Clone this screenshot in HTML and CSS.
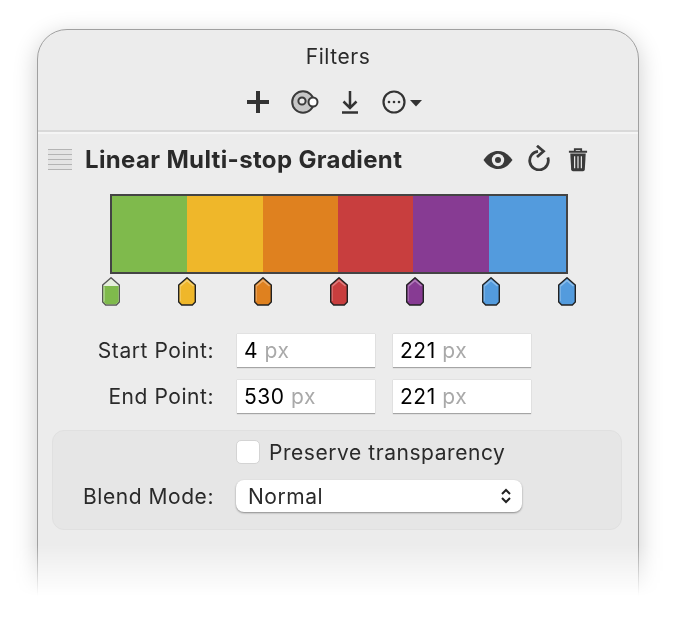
FILE: index.html
```html
<!DOCTYPE html>
<html lang="en">
<head>
  <meta charset="UTF-8" />
  <title>Filters</title>
  <link rel="stylesheet" href="styles.css">
</head>
<body>

  <svg class="defs" width="0" height="0">
    <symbol id="stop" viewBox="0 0 18 29">
      <path d="M9 .8 17.300 8v17l-3 3H3.700l-3-3V8z" fill="currentColor" stroke="#222" stroke-width="1.400"/>
      <path d="M2.500 9 9 3.500 15.500 9" fill="none" stroke="#fff" stroke-opacity=".35" stroke-width="1.500"/>
      <path d="M2.300 9v15" fill="none" stroke="#fff" stroke-opacity=".25" stroke-width="1.200"/>
    </symbol>
  </svg>

  <div class="stage">
    <div class="window">
      <div class="title">Filters</div>

      <div class="toolbar">
        <svg width="24" height="24" viewBox="0 0 24 24"><path d="M12 1v22M1 12h22" stroke="#333" stroke-width="4" fill="none"/></svg>
        <svg width="28" height="24" viewBox="0 0 28 24">
          <circle cx="12" cy="12" r="10.800" fill="#c6c6c6" stroke="#3a3a3a" stroke-width="2"/>
          <circle cx="11" cy="11" r="3.600" fill="#ececec" stroke="#3a3a3a" stroke-width="2"/>
          <circle cx="22" cy="12" r="4.500" fill="#fff" stroke="#3a3a3a" stroke-width="2"/>
        </svg>
        <svg width="18" height="24" viewBox="0 0 18 24"><path d="M9 1v17M2.500 11.500 9 18l6.500-6.500M1 22.500h16" stroke="#333" stroke-width="2.500" fill="none"/></svg>
        <svg width="42" height="24" viewBox="0 0 42 24">
          <circle cx="13" cy="12" r="10.500" fill="none" stroke="#333" stroke-width="2.200"/>
          <circle cx="8" cy="12" r="1.300" fill="#333"/><circle cx="13" cy="12" r="1.300" fill="#333"/><circle cx="18" cy="12" r="1.300" fill="#333"/>
          <path d="M29 10h12l-6 6.500z" fill="#333"/>
        </svg>
      </div>

      <div class="filter-head">
        <div class="grip"></div>
        <h2>Linear Multi-stop Gradient</h2>
        <div class="head-icons">
          <svg width="30" height="20" viewBox="0 0 30 20">
            <path d="M.5 10C5 3.500 10 1 15 1s10 2.500 14.500 9C25 16.500 20 19 15 19S5 16.500.5 10z" fill="#3a3a3a"/>
            <circle cx="15" cy="10" r="6.200" fill="#ececec"/><circle cx="15" cy="10" r="3" fill="#3a3a3a"/>
          </svg>
          <svg class="icon-redo" width="22" height="26" viewBox="0 0 22 26">
            <path d="M10 6.300a9.300 9.300 0 1 0 9.800 6.200" fill="none" stroke="#3a3a3a" stroke-width="2.800"/>
            <path d="M9 .8l6.500 5.500L9 12" fill="none" stroke="#3a3a3a" stroke-width="2.800"/>
          </svg>
          <svg class="icon-trash" width="20" height="25" viewBox="0 0 22 27">
            <path d="M1 5h20M7.500 4.500V2h7v2.500" fill="none" stroke="#3a3a3a" stroke-width="2"/>
            <path d="M2.500 7h17l-1 17.500q-.2 2-2 2h-11q-1.800 0-2-2z" fill="#3a3a3a"/>
            <path d="M7.300 10v13M11 10v13M14.700 10v13" stroke="#ececec" stroke-width="1.300"/>
          </svg>
        </div>
      </div>

      <div class="gradient-bar">
        <div class="seg seg-green"></div>
        <div class="seg seg-yellow"></div>
        <div class="seg seg-orange"></div>
        <div class="seg seg-red"></div>
        <div class="seg seg-purple"></div>
        <div class="seg seg-blue"></div>
      </div>

      <div class="stops">
        <svg class="stop" width="18" height="29" viewBox="0 0 18 29">
          <path d="M9 .8 17.300 8v17l-3 3H3.700l-3-3V8z" fill="#e6efdd" stroke="#555" stroke-width="1.400"/>
          <path d="M1.400 9h15.200v15.700L14 27.300H4L1.400 24.700z" fill="#7fba4c"/>
          <path d="M2.300 9.500v15" stroke="#fff" stroke-opacity=".35" stroke-width="1.200"/>
        </svg>
        <svg class="stop stop-yellow" width="18" height="29"><use href="#stop"/></svg>
        <svg class="stop stop-orange" width="18" height="29"><use href="#stop"/></svg>
        <svg class="stop stop-red" width="18" height="29"><use href="#stop"/></svg>
        <svg class="stop stop-purple" width="18" height="29"><use href="#stop"/></svg>
        <svg class="stop stop-blue" width="18" height="29"><use href="#stop"/></svg>
        <svg class="stop stop-blue" width="18" height="29"><use href="#stop"/></svg>
      </div>

      <div class="points">
        <label class="field-label">Start Point:</label>
        <div class="field">4 <span class="unit">px</span></div>
        <div class="field">221 <span class="unit">px</span></div>
        <label class="field-label">End Point:</label>
        <div class="field">530 <span class="unit">px</span></div>
        <div class="field">221 <span class="unit">px</span></div>
      </div>

      <div class="blend-panel">
        <div class="check-row">
          <span class="checkbox"></span>
          <span class="check-label">Preserve transparency</span>
        </div>
        <div class="blend-row">
          <label class="field-label">Blend Mode:</label>
          <div class="select">
            Normal
            <svg width="12" height="18" viewBox="0 0 12 18"><path d="M2 7l4-4 4 4M2 11l4 4 4-4" fill="none" stroke="#222" stroke-width="2"/></svg>
          </div>
        </div>
      </div>
    </div>
  </div>

</body>
</html>
```

FILE: styles.css
```css
* {
  box-sizing: border-box;
}

body {
  font-family: 'Inter', 'Liberation Sans', sans-serif;
  font-size: 21px;
  letter-spacing: 0.55px;
  margin: 0;
  background-color: #fff;
  color: #2a2a2a;
}

.defs {
  position: absolute;
}

.stage {
  height: 596px;
  padding: 29px 37px 0;
  overflow: hidden;
  -webkit-mask-image: linear-gradient(#000 545px, transparent 596px);
  mask-image: linear-gradient(#000 545px, transparent 596px);
}

.window {
  height: 620px;
  background-color: #ececec;
  border: 1px solid #a0a0a0;
  border-radius: 30px 30px 0 0;
  box-shadow: 0 6px 24px rgba(0,0,0,0.2);
}

.title {
  height: 54px;
  line-height: 54px;
  text-align: center;
}

.toolbar {
  display: flex;
  align-items: center;
  justify-content: center;
  gap: 22px;
  height: 36px;
  padding-right: 8px;
  margin-bottom: 10px;
}

.toolbar svg:first-child {
  margin-right: -1px;
}

.filter-head {
  display: flex;
  align-items: center;
  height: 55px;
  padding: 2px 50px 0 10px;
  border-top: 2px solid #d9d9d9;
  box-shadow: inset 0 2px 0 #f5f5f5;
}

.grip {
  width: 24px;
  height: 21px;
  background: repeating-linear-gradient(#b4b4b4 0, #b4b4b4 1px, #e4e4e4 1px, #e4e4e4 5px);
}

.filter-head h2 {
  margin: 0 0 0 13px;
  font-size: 24px;
  font-weight: 700;
  letter-spacing: 0.35px;
}

.head-icons {
  display: flex;
  align-items: center;
  gap: 15px;
  margin-left: auto;
}

.icon-redo {
  margin-top: -3px;
}

.icon-trash {
  margin-left: 3px;
}

.gradient-bar {
  display: flex;
  width: 458px;
  height: 80px;
  margin: 9px 0 0 72px;
  border: 2px solid #444;
}

.seg-green { width: 75px; background-color: #7fba4c; }
.seg-yellow { width: 76px; background-color: #efb72a; }
.seg-orange { width: 75px; background-color: #df811f; }
.seg-red { width: 75px; background-color: #c83e3e; }
.seg-purple { width: 76px; background-color: #873b93; }
.seg-blue { width: 77px; background-color: #539bdd; }

.stops {
  display: flex;
  justify-content: space-between;
  width: 474px;
  margin: 3px 0 0 64px;
}

.stop {
  display: block;
}

.stop-yellow { color: #efb72a; }
.stop-orange { color: #df811f; }
.stop-red { color: #c83e3e; }
.stop-purple { color: #873b93; }
.stop-blue { color: #539bdd; }

.points {
  display: grid;
  grid-template-columns: 176px 138px 138px;
  grid-auto-rows: 34px;
  column-gap: 18px;
  row-gap: 12px;
  align-items: center;
  margin-top: 27px;
}

.field-label {
  text-align: right;
  white-space: nowrap;
}

.points .field {
  margin-left: 5px;
  margin-right: -5px;
}

.field {
  height: 34px;
  line-height: 33px;
  padding-left: 7px;
  background-color: #fff;
  color: #000;
  border-top: 1px solid #e2e2e2;
  box-shadow: 0 1px 1px rgba(0,0,0,0.3);
}

.unit {
  color: #a9a9a9;
}

.blend-panel {
  width: 570px;
  height: 100px;
  margin: 17px 0 0 14px;
  padding: 9px 0 0 183px;
  background-color: #e6e6e6;
  border: 1px solid #e0e0e0;
  border-radius: 12px;
}

.check-row {
  display: flex;
  align-items: center;
  gap: 9px;
  height: 24px;
}

.checkbox {
  width: 24px;
  height: 24px;
  background-color: #fff;
  border: 1px solid #d4d4d4;
  border-radius: 5px;
}

.blend-row {
  display: flex;
  align-items: center;
  height: 32px;
  margin-top: 16px;
}

.blend-row .field-label {
  width: 132px;
  margin-left: -154px;
  margin-right: 22px;
}

.select {
  display: flex;
  align-items: center;
  justify-content: space-between;
  width: 286px;
  height: 32px;
  padding: 0 10px 0 12px;
  background-color: #fff;
  border-radius: 8px;
  box-shadow: 0 1px 2px rgba(0,0,0,0.4);
}
```
